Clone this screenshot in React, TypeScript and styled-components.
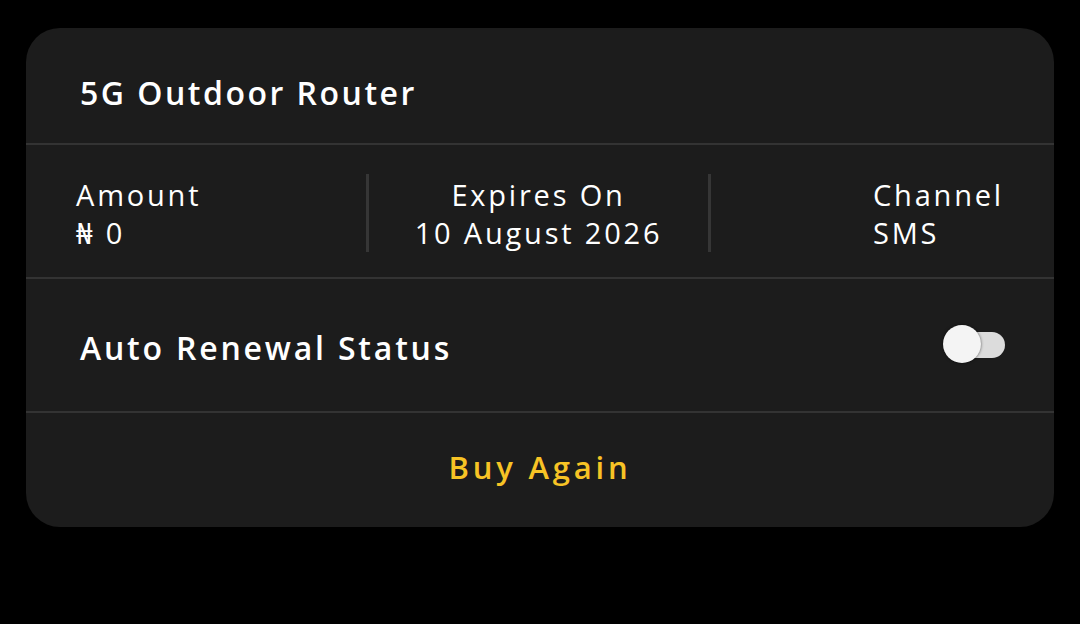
import React from "react";
import styled, { createGlobalStyle } from "styled-components";

const GlobalStyle = createGlobalStyle`
  html, body {
    margin: 0;
    padding: 0;
    background: #000;
    font-family: "Open Sans", "Noto Sans", sans-serif;
  }
`;

const Page = styled.div`
  width: 1080px;
  height: 624px;
  box-sizing: border-box;
  padding: 28px 26px 0;
`;

const Card = styled.div`
  background: #1c1c1c;
  border-radius: 34px;
  overflow: hidden;
  display: flex;
  flex-direction: column;
  height: 499px;
`;

const Section = styled.div<{ $h: number; $last?: boolean }>`
  height: ${(p) => p.$h}px;
  flex: none;
  display: flex;
  align-items: center;
  box-sizing: border-box;
  padding: ${(p) => (p.$last ? "0" : "0 49px 0 54px")};
  border-bottom: ${(p) => (p.$last ? "none" : "2px solid #333333")};
`;

const Title = styled.div`
  color: #ffffff;
  font-size: 32px;
  font-weight: 600;
  letter-spacing: 2.5px;
  padding-top: 13px;
`;

const InfoRow = styled.div`
  height: 134px;
  flex: none;
  display: grid;
  grid-template-columns: 1fr 1fr 1fr;
  align-items: center;
  border-bottom: 2px solid #333333;
  box-sizing: border-box;
`;

const InfoCell = styled.div<{ $align: "left" | "center" | "right" }>`
  height: 78px;
  display: flex;
  flex-direction: column;
  justify-content: center;
  align-items: ${(p) =>
    p.$align === "left" ? "flex-start" : p.$align === "right" ? "flex-end" : "center"};
  text-align: ${(p) => (p.$align === "center" ? "center" : "left")};
  padding: ${(p) =>
    p.$align === "left" ? "0 0 0 50px" : p.$align === "right" ? "0 50px 0 0" : "0"};
  border-right: ${(p) => (p.$align === "right" ? "none" : "3px solid #363636")};
  color: #ffffff;
  font-size: 29px;
  line-height: 38px;
  letter-spacing: 2.8px;
  margin-top: 4px;
`;

const Stack = styled.div`
  display: flex;
  flex-direction: column;
`;

const Label = styled.div`
  font-weight: 400;
  margin-top: -2px;
`;

const Value = styled.div`
  font-weight: 400;
  margin-bottom: -4px;
`;

const RowText = styled.div`
  color: #ffffff;
  font-size: 32px;
  font-weight: 600;
  flex: 1;
  letter-spacing: 2.8px;
  padding-top: 4px;
`;

const Toggle = styled.div`
  position: relative;
  width: 50px;
  height: 26px;
  border-radius: 13px;
  background: #dcdcdc;
`;

const Knob = styled.div`
  position: absolute;
  left: -12px;
  top: -7px;
  width: 38px;
  height: 38px;
  border-radius: 50%;
  background: #f4f4f4;
  box-shadow: 0 0 3px rgba(0, 0, 0, 0.6);
`;

const BuyButton = styled.button`
  flex: 1;
  height: 100%;
  background: none;
  border: none;
  color: #f7c325;
  font-family: inherit;
  font-size: 31px;
  font-weight: 600;
  letter-spacing: 3.8px;
  cursor: pointer;
  padding: 0 0 6px;
`;

const details = [
  { align: "left" as const, label: "Amount", value: "₦ 0" },
  { align: "center" as const, label: "Expires On", value: "10 August 2026" },
  { align: "right" as const, label: "Channel", value: "SMS" },
];

export default function App() {
  return (
    <Page>
      <GlobalStyle />
      <Card>
        <Section $h={117}>
          <Title>5G Outdoor Router</Title>
        </Section>
        <InfoRow>
          {details.map((d) => (
            <InfoCell key={d.label} $align={d.align}>
              <Stack>
                <Label>{d.label}</Label>
                <Value>{d.value}</Value>
              </Stack>
            </InfoCell>
          ))}
        </InfoRow>
        <Section $h={134}>
          <RowText>Auto Renewal Status</RowText>
          <Toggle>
            <Knob />
          </Toggle>
        </Section>
        <Section $h={114} $last>
          <BuyButton>Buy Again</BuyButton>
        </Section>
      </Card>
    </Page>
  );
}
